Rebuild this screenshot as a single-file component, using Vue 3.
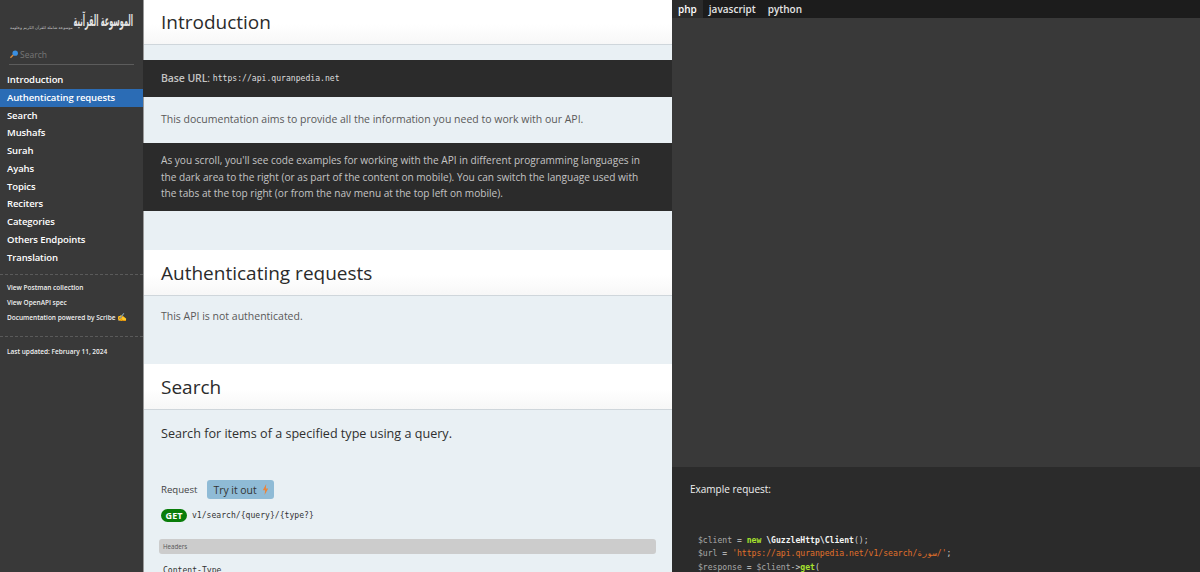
<script setup>
const navItems = ['Introduction','Authenticating requests','Search','Mushafs','Surah','Ayahs','Topics','Reciters','Categories','Others Endpoints','Translation']
const langs = ['php','javascript','python']
</script>

<template>
  <div class="page">
    <aside class="side">
      <div class="logo">
        <span class="logo-sub" dir="rtl">موسوعة شاملة للقرآن الكريم وعلومه</span>
        <span class="logo-main" dir="rtl">الموسوعة القرآنية</span>
      </div>
      <div class="search">
        <svg class="loupe" width="10" height="11" viewBox="0 0 11 11"><circle cx="6.8" cy="4" r="3" fill="#3b8fe0"/><path d="M4.6 6 1.6 9" stroke="#d98a3c" stroke-width="1.6" fill="none"/></svg>
        <span>Search</span>
      </div>
      <nav class="nav">
        <a v-for="n in navItems" :key="n" :class="{ active: n === 'Authenticating requests' }">{{ n }}</a>
      </nav>
      <div class="links">
        <a>View Postman collection</a>
        <a>View OpenAPI spec</a>
        <a>Documentation powered by Scribe <span class="hand">✍</span></a>
      </div>
      <div class="updated">Last updated: February 11, 2024</div>
    </aside>

    <main class="content">
      <h1 class="first">Introduction</h1>
      <div class="dark base"><strong>Base URL</strong>: <code>https://api.quranpedia.net</code></div>
      <p class="lead">This documentation aims to provide all the information you need to work with our API.</p>
      <div class="dark note">As you scroll, you'll see code examples for working with the API in different programming languages in the dark area to the right (or as part of the content on mobile). You can switch the language used with the tabs at the top right (or from the nav menu at the top left on mobile).</div>

      <h1 class="auth">Authenticating requests</h1>
      <p class="lead lead-auth">This API is not authenticated.</p>

      <h1>Search</h1>
      <p class="desc">Search for items of a specified type using a query.</p>
      <div class="req">
        <span class="req-label">Request</span>
        <button class="try"><span>Try it out</span> <svg width="7" height="11" viewBox="0 0 7 11"><path d="M4.2 0 .8 6.2h2.3L2.6 11 6.2 4.6H3.9z" fill="#e9853c"/></svg></button>
      </div>
      <div class="endpoint"><span class="get">GET</span><code>v1/search/{query}/{type?}</code></div>
      <div class="headers">Headers</div>
      <code class="ctype">Content-Type</code>
    </main>

    <section class="code">
      <div class="tabs">
        <span v-for="l in langs" :key="l" :class="{ on: l === 'php' }">{{ l }}</span>
      </div>
      <div class="code-empty"></div>
      <div class="example">
        <div class="ex-title">Example request:</div>
        <pre><span class="v">$client</span> = <span class="k">new</span> <b>\GuzzleHttp\Client</b>();
<span class="v">$url</span> = <span class="s">'https://api.quranpedia.net/v1/search/سورة/'</span>;
<span class="v">$response</span> = <span class="v">$client</span>-&gt;<span class="k">get</span>(</pre>
      </div>
    </section>
  </div>
</template>

<style>
html, body { margin: 0; background: #fff; }
</style>

<style scoped>
.page {
  display: flex;
  width: 1200px;
  height: 572px;
  overflow: hidden;
  font-family: "Open Sans", "Noto Sans", sans-serif;
}
.side {
  width: 143px;
  flex: none;
  background: #393939;
  color: #fff;
}
.logo {
  height: 45px;
  box-sizing: border-box;
  padding: 14px 10px 0;
  display: flex;
  justify-content: space-between;
  white-space: nowrap;
  overflow: hidden;
}
.logo-main {
  width: 60px;
  flex: none;
  font-family: "DejaVu Sans", serif;
  font-size: 8px;
  line-height: 16px;
  height: 16px;
  font-weight: 700;
  color: #e4e4e4;
  transform: scale(.82, 1.9);
  transform-origin: right center;
}
.logo-sub {
  font-family: "DejaVu Sans", serif;
  font-size: 4px;
  line-height: 8px;
  margin-top: 10px;
  color: #c4c4c4;
}
.search {
  margin: 0 9px;
  height: 19px;
  display: flex;
  align-items: center;
  gap: 1px;
  color: #777;
  font-size: 8.5px;
  border-bottom: 1px solid #5c5c5c;
}
.nav {
  margin-top: 6px;
  display: flex;
  flex-direction: column;
  font-weight: 600;
  font-size: 9.5px;
  letter-spacing: -.1px;
}
.nav a { height: 17.75px; line-height: 17.75px; padding-left: 7px; }
.nav a.active { background: #2b6cb5; }
.links {
  margin-top: 8px;
  padding: 6px 7px 12px;
  border-top: 1px dashed #5a5a5a;
  border-bottom: 1px dashed #5a5a5a;
  display: flex;
  flex-direction: column;
  font-size: 6.5px;
  font-weight: 600;
  color: #f0f0f0;
}
.links a { height: 14.4px; line-height: 14.4px; white-space: nowrap; }
.hand { color: #f0a830; font-size: 8px; }
.updated { padding: 10px 7px; font-size: 6.5px; font-weight: 600; color: #f0f0f0; }

.content {
  width: 529px;
  flex: none;
  background: #e9f0f4;
  color: #595959;
  border-left: 1px solid #999;
  box-sizing: border-box;
  font-size: 10.5px;
  line-height: 16.5px;
}
h1 {
  margin: 0;
  box-sizing: border-box;
  padding: 0 17px;
  height: 46px;
  line-height: 47px;
  font-size: 19px;
  font-weight: 400;
  color: #2b2b2b;
  background: linear-gradient(#fff 55%, #f7f7f7);
  border-bottom: 1px solid #cfd6db;
}
.first { height: 45px; line-height: 45px; margin-bottom: 15px; }
.dark { background: #2b2b2b; color: #c4c4c4; margin-left: -1px; padding: 0 18px; box-sizing: border-box; }
.base { height: 37px; display: flex; align-items: center; white-space: pre; }
.base strong { font-weight: 600; letter-spacing: -.1px; }
code { font-family: "DejaVu Sans Mono", monospace; font-size: 8.1px; }
.base code { color: #ddd; }
.lead { margin: 0; padding: 14px 17px 0; height: 46px; box-sizing: border-box; }
.note { padding: 9px 18px 0; height: 68px; font-size: 10.1px; }
.auth { margin-top: 39px; }
.lead.lead-auth { height: 68px; padding-top: 12px; }
.desc { margin: 0; padding: 16px 17px 0; font-size: 12.6px; color: #2f2f2f; height: 70px; box-sizing: border-box; }
.req {
  display: flex;
  align-items: center;
  gap: 10px;
  padding: 0 17px;
  color: #444;
  height: 19px;
  font-size: 9.6px;
}
.req-label { padding-top: 1px; }
.try {
  background: #8fbbd6;
  border: none;
  border-radius: 3px;
  width: 67px;
  height: 19px;
  padding: 0 0 0 6px;
  color: #333;
  font: inherit;
  font-size: 10.4px;
  display: flex;
  align-items: center;
  gap: 5px;
}
.try span { padding-top: 1px; }
.endpoint { display: flex; align-items: center; gap: 5px; margin: 10px 17px 0; height: 13px; color: #333; }
.get {
  background: #0a7d0a;
  color: #fff;
  border-radius: 7px;
  width: 26px;
  text-align: center;
  font-size: 9px;
  font-weight: 700;
  line-height: 13px;
}
.headers {
  margin: 17px 16px 0 15px;
  height: 15px;
  line-height: 15px;
  background: #ccc;
  border-radius: 3px;
  font-size: 6.2px;
  padding-left: 4px;
  color: #555;
}
.ctype { display: block; margin: 8px 19px; color: #333; }

.code { flex: 1; background: #393939; display: flex; flex-direction: column; color: #e8e8e8; }
.tabs { height: 18px; flex: none; background: #1c1c1c; display: flex; font-size: 10px; font-weight: 600; }
.tabs span { padding: 0 6px; line-height: 18px; color: #e4e4e4; }
.tabs span.on { background: #2b2b2b; color: #fff; }
.code-empty { height: 449px; flex: none; }
.example { background: #2b2b2b; flex: 1; padding: 14px 18px; }
.ex-title { font-size: 10px; color: #f0f0f0; line-height: 17px; }
pre {
  margin: 36px 0 0 8px;
  font-family: "DejaVu Sans Mono", monospace;
  font-size: 8.1px;
  line-height: 13.3px;
  color: #ccc;
}
.v { color: #a9a9a9; }
.k { color: #a6e22e; font-weight: 700; }
.s { color: #e0702a; }
pre b { color: #f4f4f4; }
</style>
